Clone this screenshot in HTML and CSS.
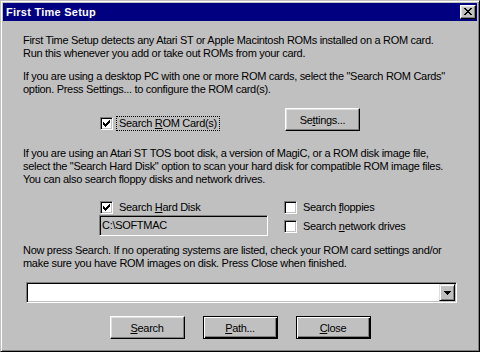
FILE: index.html
```html
<!DOCTYPE html>
<html lang="en">
<head>
  <meta charset="UTF-8">
  <title>First Time Setup</title>
  <link rel="stylesheet" href="styles.css">
</head>
<body>

  <div class="window">
    <div class="titlebar">
      <span class="title">First Time Setup</span>
      <button class="title-close">
        <svg width="8" height="7" viewBox="0 0 8 7"><path d="M0 0h2v1H0zM6 0h2v1H6zM1 1h2v1H1zM5 1h2v1H5zM2 2h4v1H2zM3 3h2v1H3zM2 4h4v1H2zM1 5h2v1H1zM5 5h2v1H5zM0 6h2v1H0zM6 6h2v1H6z" fill="#000"/></svg>
      </button>
    </div>

    <div class="content">
      <p>First Time Setup detects any Atari ST or Apple Macintosh ROMs installed on a ROM card.<br>Run this whenever you add or take out ROMs from your card.</p>

      <p class="p2">If you are using a desktop PC with one or more ROM cards, select the "Search ROM Cards"<br>option. Press Settings... to configure the ROM card(s).</p>

      <div class="rom-row">
        <label class="check rom-check">
          <span class="box"><svg width="7" height="7" viewBox="0 0 7 7"><path d="M6 0h1v1H6zM5 1h2v1H5zM0 2h1v1H0zM4 2h3v1H4zM0 3h2v1H0zM3 3h3v1H3zM0 4h5v1H0zM1 5h3v1H1zM2 6h1v1H2z" fill="#000"/></svg></span>
          <span class="text focus">Search <u>R</u>OM Card(s)</span>
        </label>
        <button class="btn">Se<u>t</u>tings...</button>
      </div>

      <p class="p3">If you are using an Atari ST TOS boot disk, a version of MagiC, or a ROM disk image file,<br>select the "Search Hard Disk" option to scan your hard disk for compatible ROM image files.<br>You can also search floppy disks and network drives.</p>

      <div class="disk-row">
        <div class="disk-col">
          <label class="check">
            <span class="box"><svg width="7" height="7" viewBox="0 0 7 7"><path d="M6 0h1v1H6zM5 1h2v1H5zM0 2h1v1H0zM4 2h3v1H4zM0 3h2v1H0zM3 3h3v1H3zM0 4h5v1H0zM1 5h3v1H1zM2 6h1v1H2z" fill="#000"/></svg></span>
            <span class="text">Search <u>H</u>ard Disk</span>
          </label>
          <div class="edit">C:\SOFTMAC</div>
        </div>
        <div class="extra-col">
          <label class="check">
            <span class="box"></span>
            <span class="text">Search <u>f</u>loppies</span>
          </label>
          <label class="check">
            <span class="box"></span>
            <span class="text">Search <u>n</u>etwork drives</span>
          </label>
        </div>
      </div>

      <p class="p4">Now press Search. If no operating systems are listed, check your ROM card settings and/or<br>make sure you have ROM images on disk. Press Close when finished.</p>

      <div class="combo">
        <span class="combo-btn"><svg width="7" height="4" viewBox="0 0 7 4"><path d="M0 0h7v1H0zM1 1h5v1H1zM2 2h3v1H2zM3 3h1v1H3z" fill="#000"/></svg></span>
      </div>

      <div class="buttons">
        <button class="btn"><u>S</u>earch</button>
        <button class="btn framed"><u>P</u>ath...</button>
        <button class="btn framed"><u>C</u>lose</button>
      </div>
    </div>
  </div>

</body>
</html>
```

FILE: styles.css
```css
* {
  box-sizing: border-box;
}

body {
  margin: 0;
  font-family: 'Liberation Sans', Arial, sans-serif;
  font-size: 11px;
  letter-spacing: -0.3px;
  color: #000;
  background-color: #c0c0c0;
}

.window {
  width: 480px;
  height: 352px;
  padding: 2px;
  background-color: #c0c0c0;
  border: 1px solid;
  border-color: #c0c0c0 #000 #000 #c0c0c0;
  box-shadow: inset 1px 1px #fff, inset -1px -1px #808080;
}

.titlebar {
  display: flex;
  align-items: center;
  height: 18px;
  padding: 0 1px 0 3px;
  background-color: #000080;
  color: white;
}

.title {
  flex: 1;
  font-weight: bold;
  letter-spacing: 0.25px;
}

.title-close {
  display: flex;
  align-items: center;
  justify-content: center;
  width: 16px;
  height: 14px;
  padding: 0 1px 1px 0;
  background-color: #c0c0c0;
  border: 1px solid;
  border-color: #fff #000 #000 #fff;
  box-shadow: inset -1px -1px #808080, inset 1px 1px #dfdfdf;
}

.content {
  padding: 13px 20px 0;
}

p {
  margin: 0;
  line-height: 13px;
  white-space: nowrap;
}

.p2 {
  margin-top: 10px;
}

.p3 {
  margin-top: 16px;
}

.p4 {
  margin-top: 8px;
}

u {
  text-decoration-thickness: 1px;
  text-underline-offset: 1px;
}

/* checkboxes */
.check {
  display: flex;
  align-items: center;
  height: 15px;
  white-space: nowrap;
}

.box {
  display: flex;
  align-items: center;
  justify-content: center;
  width: 13px;
  height: 13px;
  background-color: #fff;
  border: 1px solid;
  border-color: #808080 #fff #fff #808080;
  box-shadow: inset 1px 1px #000, inset -1px -1px #c0c0c0;
}

.check .text {
  margin-left: 3px;
  padding: 0 2px;
  line-height: 13px;
  border: 1px solid transparent;
}

.check .focus {
  border: 1px dotted #000;
}

.rom-row {
  display: flex;
  margin-top: 12px;
  padding-left: 77px;
  height: 23px;
}

.rom-check {
  width: 185px;
  margin-top: 8px;
}

.disk-row {
  display: flex;
  margin-top: 14px;
  padding-left: 76px;
}

.disk-col {
  width: 185px;
}

.disk-col .check {
  padding-left: 1px;
}

.extra-col {
  display: flex;
  flex-direction: column;
  gap: 4px;
}

.edit {
  width: 169px;
  height: 21px;
  padding: 3px 2px;
  line-height: 13px;
  background-color: #c0c0c0;
  border: 1px solid;
  border-color: #808080 #fff #fff #808080;
  box-shadow: inset 1px 1px #000, inset -1px -1px #c0c0c0;
}

.combo {
  display: flex;
  justify-content: flex-end;
  align-items: center;
  width: 431px;
  height: 21px;
  margin: 12px 0 0 3px;
  padding: 1px;
  background-color: #fff;
  border: 1px solid;
  border-color: #808080 #fff #fff #808080;
  box-shadow: inset 1px 1px #000, inset -1px -1px #c0c0c0;
}

.combo-btn {
  display: flex;
  align-items: center;
  justify-content: center;
  width: 16px;
  height: 17px;
  background-color: #c0c0c0;
  border: 1px solid;
  border-color: #dfdfdf #000 #000 #dfdfdf;
  box-shadow: inset 1px 1px #fff, inset -1px -1px #808080;
}

/* push buttons */
.btn {
  width: 75px;
  height: 23px;
  padding: 0;
  font-family: inherit;
  font-size: 11px;
  letter-spacing: inherit;
  color: #000;
  background-color: #c0c0c0;
  border: 1px solid;
  border-color: #fff #000 #000 #fff;
  box-shadow: inset -1px -1px #808080, inset 1px 1px #dfdfdf;
}

.btn.framed {
  border-color: #000;
  box-shadow: inset 1px 1px #fff, inset -1px -1px #000, inset -2px -2px #808080;
}

.buttons {
  display: flex;
  justify-content: center;
  gap: 18px;
  margin-top: 13px;
}
```
